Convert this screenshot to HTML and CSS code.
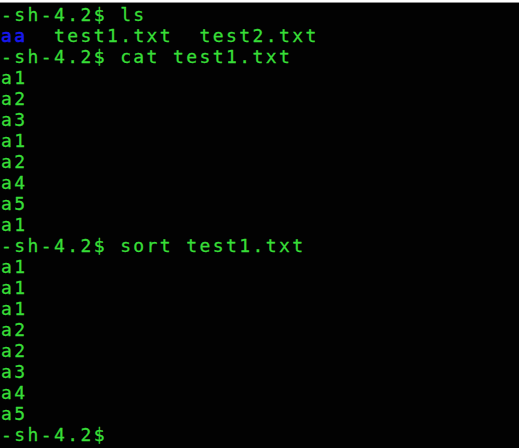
FILE: index.html
```html
<!DOCTYPE html>
<html>
<head>
<meta charset="utf-8">
<link rel="stylesheet" href="styles.css">
</head>
<body>
<div class="term"><pre class="out">-sh-4.2$ ls
<span class="dir">aa</span>  test1.txt  test2.txt
-sh-4.2$ cat test1.txt
a1
a2
a3
a1
a2
a4
a5
a1
-sh-4.2$ sort test1.txt
a1
a1
a1
a2
a2
a3
a4
a5
-sh-4.2$</pre></div>
</body>
</html>
```
FILE: styles.css
```css
html, body {
  margin: 0;
  padding: 0;
  background: #000;
  height: 100%;
  overflow: hidden;
}
.term {
  height: 100%;
  box-sizing: border-box;
  border-top: 2px solid #fff;
  box-shadow: inset 0 1px 0 #8a8a8a;
  background: #020202;
  padding: 2px 0 0 1px;
}
.out {
  margin: 0;
  font-family: "DejaVu Sans Mono", monospace;
  font-size: 18px;
  line-height: 21px;
  letter-spacing: 2.4px;
  color: #38de38;
  -webkit-text-stroke: 0.3px #38de38;
}
.dir {
  color: #1818ee;
  -webkit-text-stroke: 0.6px #1818ee;
}
```
